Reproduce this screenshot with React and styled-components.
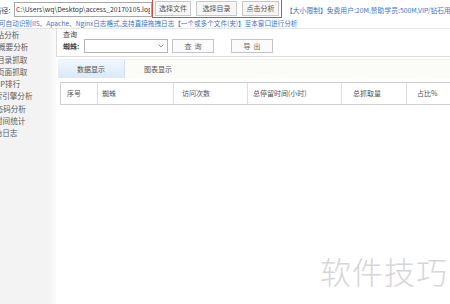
import React from "react"
import styled, { createGlobalStyle } from "styled-components"

const GlobalStyle = createGlobalStyle`
  html, body {
    margin: 0;
    padding: 0;
    background: #ffffff;
  }
  body {
    font-family: "Noto Sans CJK SC", "Noto Sans", sans-serif;
    font-size: 7px;
    color: #444;
  }
`

const Page = styled.div`
  position: relative;
  width: 450px;
  height: 304px;
  overflow: hidden;
  background: #fff;
`

const TopBar = styled.div`
  display: flex;
  align-items: center;
  height: 19px;
  white-space: nowrap;
`

const PathLabel = styled.span`
  margin-left: -6px;
  width: 20px;
  flex: none;
  font-size: 7.3px;
  color: #444;
`

const PathInput = styled.div`
  box-sizing: border-box;
  width: 138px;
  height: 15px;
  flex: none;
  border: 1px solid #a8a8a8;
  padding: 0 1px;
  overflow: hidden;
`

const PathText = styled.span`
  display: block;
  width: 134px;
  overflow: hidden;
  line-height: 13px;
  font-size: 6.8px;
  color: #333;
`

const ButtonGroup = styled.div`
  display: flex;
  gap: 5px;
  align-items: center;
  flex: none;
  height: 18px;
  box-sizing: border-box;
  margin-top: -1px;
  padding: 0 2px;
  border: 1px solid #d24a4a;
  border-top: none;
`

const FileButton = styled.div`
  box-sizing: border-box;
  width: ${props => props.$width}px;
  height: 15px;
  border: 1px solid #c9c9c9;
  background: #f6f6f6;
  text-align: center;
  line-height: 13px;
  color: #555;
`

const Notice = styled.span`
  margin-left: 4px;
  color: #3a74c6;
  font-size: 6.8px;
`

const InfoLine = styled.div`
  height: 9px;
  line-height: 9px;
  margin-left: -1px;
  font-size: 6.6px;
  color: #3a74c6;
  white-space: nowrap;
  border-bottom: 1px solid #e6e6e6;
`

const Body = styled.div`
  display: flex;
  height: 276px;
`

const Sidebar = styled.div`
  width: 56px;
  flex: none;
  overflow: hidden;
  background: linear-gradient(to right, #f3f3f3 0%, #f3f3f3 85%, #fbfbfb 100%);
`

const NavItem = styled.div`
  margin-left: ${props => props.$shift}px;
  height: 12.3px;
  line-height: 12.3px;
  font-size: 7.6px;
  color: #5a5a5a;
  white-space: nowrap;
`

const Main = styled.div`
  flex: 1;
  min-width: 0;
`

const QueryBox = styled.div`
  border-left: 1px solid #dcdcdc;
  border-bottom: 1px solid #dcdcdc;
  padding: 0 0 3px 6px;
`

const QueryTitle = styled.div`
  height: 10px;
  line-height: 10px;
  color: #444;
`

const QueryRow = styled.div`
  display: flex;
  align-items: center;
  height: 14px;
`

const FieldLabel = styled.span`
  width: 21px;
  flex: none;
  font-weight: bold;
  color: #444;
`

const Select = styled.div`
  box-sizing: border-box;
  width: 84px;
  height: 14px;
  border: 1px solid #b4b4b4;
  display: flex;
  align-items: center;
  justify-content: flex-end;
  padding-right: 3px;
`

const ActionButton = styled.div`
  box-sizing: border-box;
  width: 42px;
  height: 14px;
  margin-left: ${props => props.$gap}px;
  border: 1px solid #c4c4c4;
  background: #fbfbfb;
  text-align: center;
  line-height: 12px;
  color: #666;
  letter-spacing: 3px;
  text-indent: 3px;
`

const TabStrip = styled.div`
  display: flex;
  height: 18px;
  margin: 2px 0 0 2px;
  background: #fbfbf8;
  border-top: 1px solid #efefef;
`

const Tab = styled.div`
  width: 66px;
  text-align: center;
  line-height: 18px;
  color: #555;
  background: ${props =>
    props.$active ? "linear-gradient(to bottom, #f1f7fd, #d9e9f8)" : "transparent"};
  border-right: 1px solid ${props => (props.$active ? "#cfe0f0" : "transparent")};
`

const Table = styled.div`
  display: flex;
  height: 21px;
  margin: 4px 0 0 4px;
  border: 1px solid #cfcfcf;
  border-right: none;
`

const HeadCell = styled.div`
  box-sizing: border-box;
  width: ${props => props.$width}px;
  flex: none;
  padding-left: ${props => props.$pad}px;
  line-height: 21px;
  color: #555;
  white-space: nowrap;
  border-right: 1px solid ${props => (props.$last ? "transparent" : "#dedede")};
`

const Watermark = styled.div`
  position: absolute;
  left: 320px;
  top: 248px;
  font-size: 31px;
  font-weight: 300;
  color: #d6d6d6;
  letter-spacing: 1px;
  white-space: nowrap;
`

const navItems = [
  { label: "网站分析", shift: -11 },
  { label: "概要分析", shift: -2 },
  { label: "目录抓取", shift: -3 },
  { label: "页面抓取", shift: -3 },
  { label: "IP排行", shift: -2 },
  { label: "搜索引擎分析", shift: -13 },
  { label: "状态码分析", shift: -12 },
  { label: "时间统计", shift: -5 },
  { label: "原始日志", shift: -13 },
]

const columns = [
  { label: "序号", width: 37, pad: 6 },
  { label: "蜘蛛", width: 76, pad: 4 },
  { label: "访问次数", width: 74, pad: 8 },
  { label: "总停留时间(小时)", width: 94, pad: 5 },
  { label: "总抓取量", width: 65, pad: 11 },
  { label: "占比%", width: 60, pad: 10, last: true },
]

const Chevron = () => (
  <svg width="6" height="4" viewBox="0 0 6 4">
    <path d="M0.5 0.5 L3 3 L5.5 0.5" fill="none" stroke="#777" strokeWidth="0.8" />
  </svg>
)

export default () => {
  return (
    <Page>
      <GlobalStyle />
      <TopBar>
        <PathLabel>路径:</PathLabel>
        <PathInput>
          <PathText>C:\Users\wq\Desktop\access_20170105.log</PathText>
        </PathInput>
        <ButtonGroup>
          <FileButton $width={36}>选择文件</FileButton>
          <FileButton $width={41}>选择目录</FileButton>
          <FileButton $width={37}>点击分析</FileButton>
        </ButtonGroup>
        <Notice>【大小限制】免费用户:20M,赞助学员:500M,VIP/钻石用户:无限制</Notice>
      </TopBar>
      <InfoLine>
        可自动识别IIS、Apache、Nginx日志格式,支持直接拖拽日志【一个或多个文件(夹)】至本窗口进行分析
      </InfoLine>
      <Body>
        <Sidebar>
          {navItems.map(item => (
            <NavItem key={item.label} $shift={item.shift}>
              {item.label}
            </NavItem>
          ))}
        </Sidebar>
        <Main>
          <QueryBox>
            <QueryTitle>查询</QueryTitle>
            <QueryRow>
              <FieldLabel>蜘蛛:</FieldLabel>
              <Select>
                <Chevron />
              </Select>
              <ActionButton $gap={4}>查询</ActionButton>
              <ActionButton $gap={17}>导出</ActionButton>
            </QueryRow>
          </QueryBox>
          <TabStrip>
            <Tab $active>数据显示</Tab>
            <Tab>图表显示</Tab>
          </TabStrip>
          <Table>
            {columns.map(col => (
              <HeadCell key={col.label} $width={col.width} $pad={col.pad} $last={col.last}>
                {col.label}
              </HeadCell>
            ))}
          </Table>
        </Main>
      </Body>
      <Watermark>软件技巧</Watermark>
    </Page>
  )
}
